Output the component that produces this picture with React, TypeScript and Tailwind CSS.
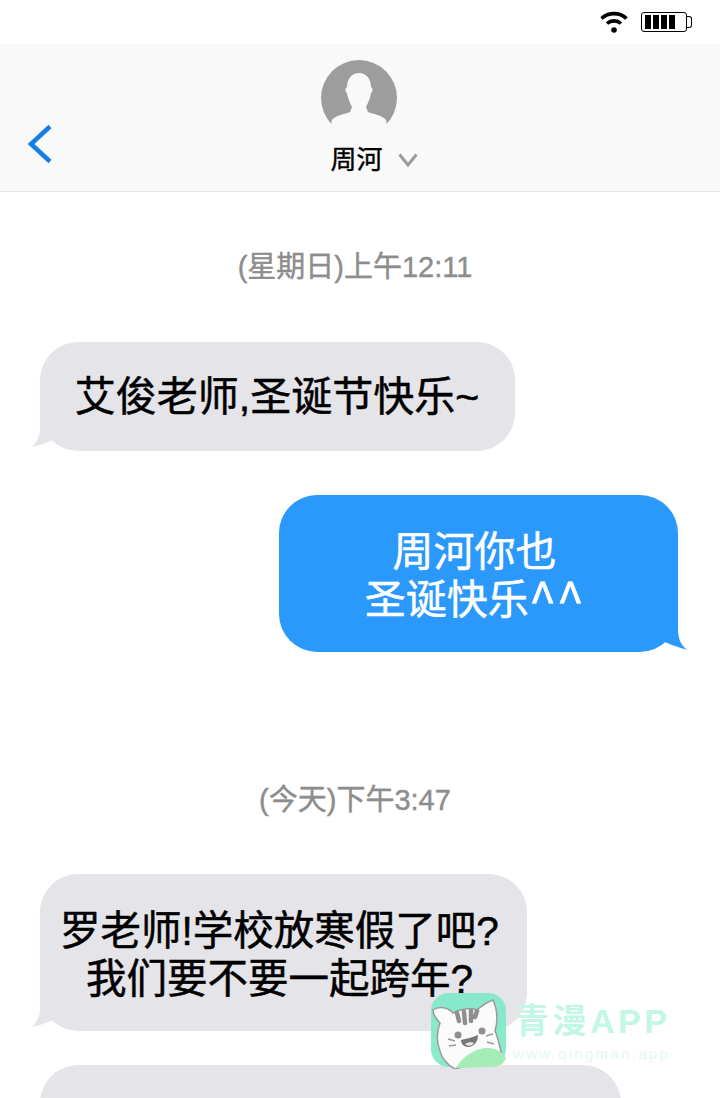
const CJK = { fontFamily: '"Liberation Sans","Noto Sans CJK SC",sans-serif' };
const NOTO = { fontFamily: '"Noto Sans CJK SC",sans-serif' };

function Wifi() {
  return (
    <svg width="28" height="24" viewBox="0 0 28 24" className="block">
      <path d="M1.5 8.5C8.5 2 19.5 2 26.500 8.500" fill="none" stroke="#000" strokeWidth="3.600" />
      <path d="M7 13.500C11 10 17 10 21 13.500" fill="none" stroke="#000" strokeWidth="3.600" />
      <circle cx="14" cy="20" r="2.800" fill="#000" />
    </svg>
  );
}

function Battery() {
  return (
    <div className="flex items-center">
      <div className="flex h-[20px] w-[46px] items-center gap-[2px] rounded-[3px] border border-black px-[3px]">
        <div className="h-[14px] w-[6px] bg-black" />
        <div className="h-[14px] w-[6px] bg-black" />
        <div className="h-[14px] w-[6px] bg-black" />
        <div className="h-[14px] w-[6px] bg-black" />
      </div>
      <div className="h-[12px] w-[5px] rounded-r-[3px] border border-l-0 border-black" />
    </div>
  );
}

function Avatar() {
  return (
    <svg width="76" height="76" viewBox="0 0 76 76" className="block">
      <circle cx="38" cy="38" r="38" fill="#9d9d9d" />
      <path
        d="M38 13C31 13 26 19 26 27C24 28 24 32 26 33C27 39 29 43 31 47L29 52C24 54 15 55 11 60C10 63 10 65 12 68L20 77L56 77L64 68C66 65 66 63 65 60C61 55 52 54 47 52L45 47C47 43 49 39 50 33C52 32 52 28 50 27C50 19 45 13 38 13Z"
        fill="#f9f9f9"
      />
    </svg>
  );
}

function Header() {
  return (
    <div className="relative flex h-[148px] flex-col items-center border-b border-[#e2e2e2] bg-[#f9f9f9] pr-[2px] pt-[16px]">
      <Avatar />
      <div className="ml-[30px] mt-[7px] flex h-[34px] items-center gap-[15px]">
        <span className="text-[26px] leading-[34px] text-black [-webkit-text-stroke:0.4px]">周河</span>
        <svg width="20" height="14" viewBox="0 0 20 14" className="block">
          <path d="M1.500 1.500L10 12L18.500 1.500" fill="none" stroke="#9c9c9c" strokeWidth="3" />
        </svg>
      </div>
      <svg width="26" height="40" viewBox="0 0 26 40" className="absolute left-[27px] top-[80px]">
        <path d="M23 2.500L4 20L23 37.500" fill="none" stroke="#167fe6" strokeWidth="4.500" />
      </svg>
    </div>
  );
}

function Time({ children, mt }: { children: string; mt: string }) {
  return (
    <div className={`${mt} pr-[10px] text-center text-[29px] leading-[40px] text-[#8d8d8d] [-webkit-text-stroke:0.4px]`}>
      {children}
    </div>
  );
}

function LeftTail() {
  return (
    <svg width="32" height="40" viewBox="0 0 32 40" className="absolute bottom-[3px] left-[-8px]">
      <path d="M8 0L8 20C8 28 5 34 0 39C10 37 18 33 28 29L32 0Z" fill="#e4e4e9" />
    </svg>
  );
}

function RightTail() {
  return (
    <svg width="32" height="40" viewBox="0 0 32 40" className="absolute bottom-[1px] right-[-9px]">
      <path d="M23 0L23 18C23 28 26 34 32 39C22 36 12 32 2 28L0 0Z" fill="#2b98fb" />
    </svg>
  );
}

export default function App() {
  return (
    <div className="relative h-[1098px] w-[720px] overflow-hidden bg-white" style={CJK}>
      <div className="flex h-[44px] items-center justify-end gap-[13px] pb-[1px] pr-[28px]">
        <Wifi />
        <Battery />
      </div>
      <Header />

      <Time mt="mt-[55px]">(星期日)上午12:11</Time>

      <div className="relative ml-[40px] mt-[55px] flex h-[109px] w-[475px] items-center justify-center rounded-[38px] bg-[#e4e4e9] pr-[1px]">
        <LeftTail />
        <span className="relative text-[41px] leading-[48px] text-black [-webkit-text-stroke:0.5px]">艾俊老师,圣诞节快乐~</span>
      </div>

      <div className="relative ml-[279px] mt-[44px] flex h-[157px] w-[399px] items-center justify-center rounded-[38px] bg-[#2b98fb] pr-[8px] pt-[5px] text-center">
        <RightTail />
        <span className="relative text-[41px] leading-[48px] text-white [-webkit-text-stroke:0.5px]">
          周河你也
          <br />
          圣诞快乐
          <span className="relative top-[5px] text-[50px] leading-[0px]" style={NOTO}>^^</span>
        </span>
      </div>

      <Time mt="mt-[128px]">(今天)下午3:47</Time>

      <div className="relative ml-[40px] mt-[54px] flex h-[157px] w-[487px] items-center justify-center rounded-[38px] bg-[#e4e4e9] pr-[8px] pt-[5px] text-center">
        <LeftTail />
        <span className="relative text-[40.5px] leading-[48px] text-black [-webkit-text-stroke:0.5px]">
          罗老师!学校放寒假了吧?
          <br />
          我们要不要一起跨年?
        </span>
      </div>

      <div className="ml-[40px] mt-[34px] h-[100px] w-[581px] rounded-[38px] bg-[#e4e4e9]" />

      <div className="absolute left-[431px] top-[993px] flex items-start gap-[9px]">
        <svg width="75" height="76" viewBox="0 0 75 76" className="block shrink-0">
          <rect x="0" y="0" width="75" height="74" rx="18" fill="#7de8c6" fillOpacity="0.9" />
          <path d="M2 17C8 13 17 14 22 20C31 16 40 15 46 17C52 12 58 8 62 7C66 16 67 28 64 38C67 44 68 52 71 62C60 66 45 70 24 76C16 72 10 64 9 58C5 48 6 38 9 30C5 26 2 21 2 17Z" fill="#fbfbfb" stroke="#9a9a9a" strokeWidth="1.500" />
          <path d="M25 75C30 65 44 55 56 55C66 55 73 60 75 65C73 71 68 74 60 74L25 75Z" fill="#a5ecb6" />
          <path d="M26 20L28 28M33 19L34 30M40 18L40 28M46 18L44 24" stroke="#8f8f8f" strokeWidth="4.500" strokeLinecap="round" />
          <circle cx="27" cy="42" r="3.500" fill="#8f8f8f" />
          <circle cx="51" cy="38" r="3.500" fill="#8f8f8f" />
          <path d="M30 47C35 46 42 44 47 42C47 50 42 54 37 54C33 54 30 51 30 47Z" fill="#777" />
          <path d="M34 51C37 49 41 49 43 50C41 53 37 54 34 51Z" fill="#e8e8e8" />
          <path d="M17 46L24 48M18 53L25 52M55 43L62 41M56 49L63 51" stroke="#9a9a9a" strokeWidth="1.500" />
        </svg>
        <div className="flex flex-col">
          <div className="mt-[7px] whitespace-nowrap text-[34px] font-bold leading-[42px] tracking-[3.500px] text-[#c4f6e4]">青漫APP</div>
          <div className="ml-[-2px] mt-[3px] whitespace-nowrap text-[15px] leading-[18px] tracking-[2.300px] text-[#e3f8f0]">www.qingman.app</div>
        </div>
      </div>
    </div>
  );
}
